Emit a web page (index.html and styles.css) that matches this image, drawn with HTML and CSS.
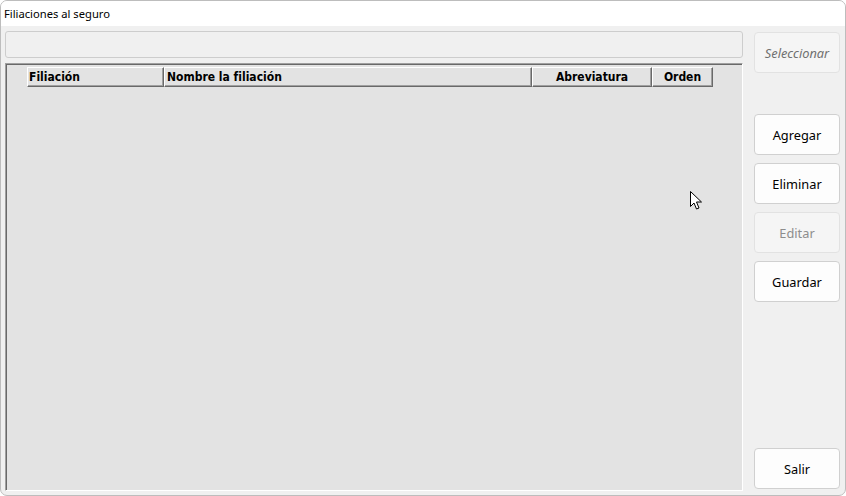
FILE: index.html
```html
<!DOCTYPE html>
<html lang="es">
<head>
<meta charset="utf-8">
<title>Filiaciones al seguro</title>
<link rel="stylesheet" href="styles.css">
</head>
<body>
<div class="window">
  <div class="titlebar">Filiaciones al seguro</div>
  <div class="content">
    <div class="main">
      <div class="search"></div>
      <div class="grid">
        <div class="grid-header">
          <div class="rowhead"></div>
          <div class="hcell c-fil">Filiación</div>
          <div class="hcell c-nom">Nombre la filiación</div>
          <div class="hcell c-abr center">Abreviatura</div>
          <div class="hcell c-ord center">Orden</div>
        </div>
      </div>
    </div>
    <div class="side">
      <button class="btn disabled italic">Seleccionar</button>
      <button class="btn first">Agregar</button>
      <button class="btn">Eliminar</button>
      <button class="btn disabled">Editar</button>
      <button class="btn">Guardar</button>
      <button class="btn exit">Salir</button>
    </div>
  </div>
  <svg class="cursor" width="14" height="20" viewBox="0 0 14 20">
    <path d="M0.5 0.5 L0.5 15.5 L4 12 L6.5 18 L9 17 L6.5 11 L11.5 11 Z" fill="#ffffff" stroke="#000000" stroke-width="1" stroke-linejoin="miter"/>
  </svg>
</div>
</body>
</html>
```

FILE: styles.css
```css
* { box-sizing: border-box; }
html, body { margin: 0; padding: 0; background: #ffffff; }
.window {
  position: relative;
  width: 846px;
  height: 496px;
  border: 1px solid #bdbdbd;
  border-radius: 7px;
  overflow: hidden;
  background: #f0f0f0;
  display: flex;
  flex-direction: column;
  font-family: "Noto Sans", "Open Sans", sans-serif;
}
.titlebar {
  height: 25px;
  background: #ffffff;
  font-size: 11.2px;
  color: #000;
  padding-left: 3px;
  line-height: 25px;
}
.content {
  flex: 1;
  display: flex;
  padding: 5px 5px 4px 4px;
  gap: 11px;
}
.main {
  flex: 1;
  display: flex;
  flex-direction: column;
  gap: 5px;
}
.search {
  height: 27px;
  background: #f0f0f0;
  border: 1px solid #cdcdcd;
  border-radius: 3px;
}
.grid {
  flex: 1;
  background: #e3e3e3;
  border-top: 1px solid #a0a0a0;
  border-left: 1px solid #a0a0a0;
  border-right: 1px solid #ffffff;
  border-bottom: 1px solid #ffffff;
  box-shadow: inset 1px 1px 0 #696969;
  padding: 3px 0 0 1px;
}
.grid-header {
  display: flex;
  height: 20px;
  font-family: "DejaVu Sans Condensed", "DejaVu Sans", Verdana, sans-serif;
  font-stretch: condensed;
  font-weight: bold;
  font-size: 12px;
  color: #000;
}
.rowhead { width: 20px; }
.hcell {
  height: 20px;
  background: #e3e3e3;
  border-top: 1px solid #ffffff;
  border-left: 1px solid #ffffff;
  border-right: 1px solid #696969;
  border-bottom: 1px solid #696969;
  box-shadow: inset -1px -1px 0 #a0a0a0;
  padding-left: 1px;
  line-height: 19px;
  white-space: nowrap;
  overflow: hidden;
}
.c-fil { width: 137px; }
.c-nom { width: 368px; padding-left: 2px; }
.c-abr { width: 120px; }
.c-ord { width: 61px; }
.center { text-align: center; padding-left: 0; }
.side {
  width: 86px;
  display: flex;
  flex-direction: column;
  gap: 8px;
  padding: 1px 0 2px 0;
}
.btn {
  height: 41px;
  width: 86px;
  background: #fdfdfd;
  border: 1px solid #d0d0d0;
  border-radius: 4px;
  font-family: "Noto Sans", "Open Sans", sans-serif;
  font-size: 12.8px;
  color: #000;
  padding: 0;
}
.btn.disabled {
  background: #f5f5f5;
  border-color: #e2e2e2;
  color: #8d8d8d;
}
.btn.italic { font-style: italic; color: #707070; }
.btn.first { margin-top: 33px; }
.btn.exit { margin-top: auto; }
.cursor {
  position: absolute;
  left: 689px;
  top: 190px;
}
```
